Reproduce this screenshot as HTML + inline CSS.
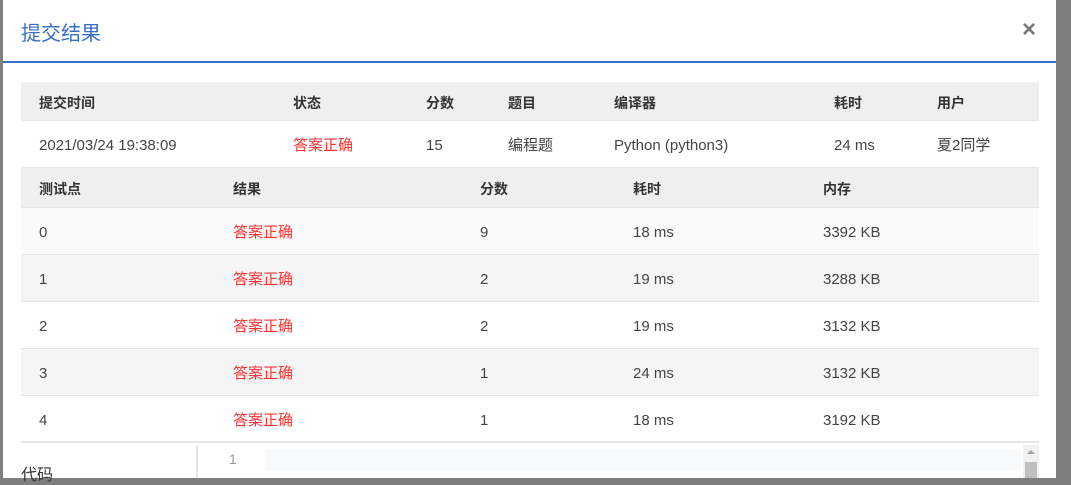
<!DOCTYPE html>
<html><head><meta charset="utf-8"><style>
*{margin:0;padding:0;box-sizing:border-box}
body{width:1071px;height:478px;overflow:hidden;background:#7f7f7f;font-family:"Liberation Sans","Noto Sans CJK SC",sans-serif;font-size:15px;color:#444;position:relative}
.modal{position:absolute;left:3px;top:0;width:1053px;height:478px;background:#fff}
.title{position:absolute;left:18px;top:17px;font-size:20px;color:#3a6fc7}
.close{position:absolute;left:1019px;top:16px;font-size:24px;color:#777;font-weight:bold}
.bar{position:absolute;left:0;top:61px;width:1053px;height:2px;background:#3a6fc7}
.row{position:absolute;left:18px;width:1018px;border-bottom:1px solid #e6e6e6}
.row span{position:absolute;white-space:nowrap;line-height:20px}
.h{background:#efefef;font-weight:bold;color:#333;font-size:14px}
.red{color:#f33}
</style></head><body>
<div class="modal">
<div class="title">提交结果</div>
<div class="close">×</div>
<div class="bar"></div>
<div class="row h" style="top:82px;height:39px"><span style="left:18px;top:11px">提交时间</span><span style="left:272px;top:11px">状态</span><span style="left:405px;top:11px">分数</span><span style="left:487px;top:11px">题目</span><span style="left:593px;top:11px">编译器</span><span style="left:813px;top:11px">耗时</span><span style="left:916px;top:11px">用户</span></div>
<div class="row" style="top:121px;height:47px"><span style="left:18px;top:15px">2021/03/24 19:38:09</span><span class="red" style="left:272px;top:15px">答案正确</span><span style="left:405px;top:15px">15</span><span style="left:487px;top:15px">编程题</span><span style="left:593px;top:15px">Python (python3)</span><span style="left:813px;top:15px">24 ms</span><span style="left:916px;top:15px">夏2同学</span></div>
<div class="row h" style="top:168px;height:40px"><span style="left:18px;top:11px">测试点</span><span style="left:212px;top:11px">结果</span><span style="left:459px;top:11px">分数</span><span style="left:612px;top:11px">耗时</span><span style="left:802px;top:11px">内存</span></div>
<div class="row" style="top:208px;height:47px;background:#fafafa"><span style="left:18px;top:15px">0</span><span class="red" style="left:212px;top:15px">答案正确</span><span style="left:459px;top:15px">9</span><span style="left:612px;top:15px">18 ms</span><span style="left:802px;top:15px">3392 KB</span></div>
<div class="row" style="top:255px;height:47px;background:#f5f5f5"><span style="left:18px;top:15px">1</span><span class="red" style="left:212px;top:15px">答案正确</span><span style="left:459px;top:15px">2</span><span style="left:612px;top:15px">19 ms</span><span style="left:802px;top:15px">3288 KB</span></div>
<div class="row" style="top:302px;height:47px;background:#fff"><span style="left:18px;top:15px">2</span><span class="red" style="left:212px;top:15px">答案正确</span><span style="left:459px;top:15px">2</span><span style="left:612px;top:15px">19 ms</span><span style="left:802px;top:15px">3132 KB</span></div>
<div class="row" style="top:349px;height:47px;background:#f5f5f5"><span style="left:18px;top:15px">3</span><span class="red" style="left:212px;top:15px">答案正确</span><span style="left:459px;top:15px">1</span><span style="left:612px;top:15px">24 ms</span><span style="left:802px;top:15px">3132 KB</span></div>
<div class="row" style="top:396px;height:47px;background:#fff;border-bottom:2px solid #e6e6e6"><span style="left:18px;top:15px">4</span><span class="red" style="left:212px;top:15px">答案正确</span><span style="left:459px;top:15px">1</span><span style="left:612px;top:15px">18 ms</span><span style="left:802px;top:15px">3192 KB</span></div>
<div style="position:absolute;left:18px;top:461px;font-size:16px;color:#333">代码</div>
<div style="position:absolute;left:193px;top:445px;width:2px;height:33px;background:#e6e6e6"></div>
<div style="position:absolute;left:226px;top:451px;font-size:14px;color:#999">1</div>
<div style="position:absolute;left:263px;top:449px;width:755px;height:22px;background:#f8f9fb"></div>
<div style="position:absolute;left:1020px;top:445px;width:16px;height:33px;background:#f1f1f1"></div>
<div style="position:absolute;left:1022px;top:462px;width:12px;height:16px;background:#c1c1c1"></div>
<div style="position:absolute;left:1024px;top:450px;width:0;height:0;border-left:4px solid transparent;border-right:4px solid transparent;border-bottom:4px solid #a3a3a3"></div>
</div>
</body></html>
